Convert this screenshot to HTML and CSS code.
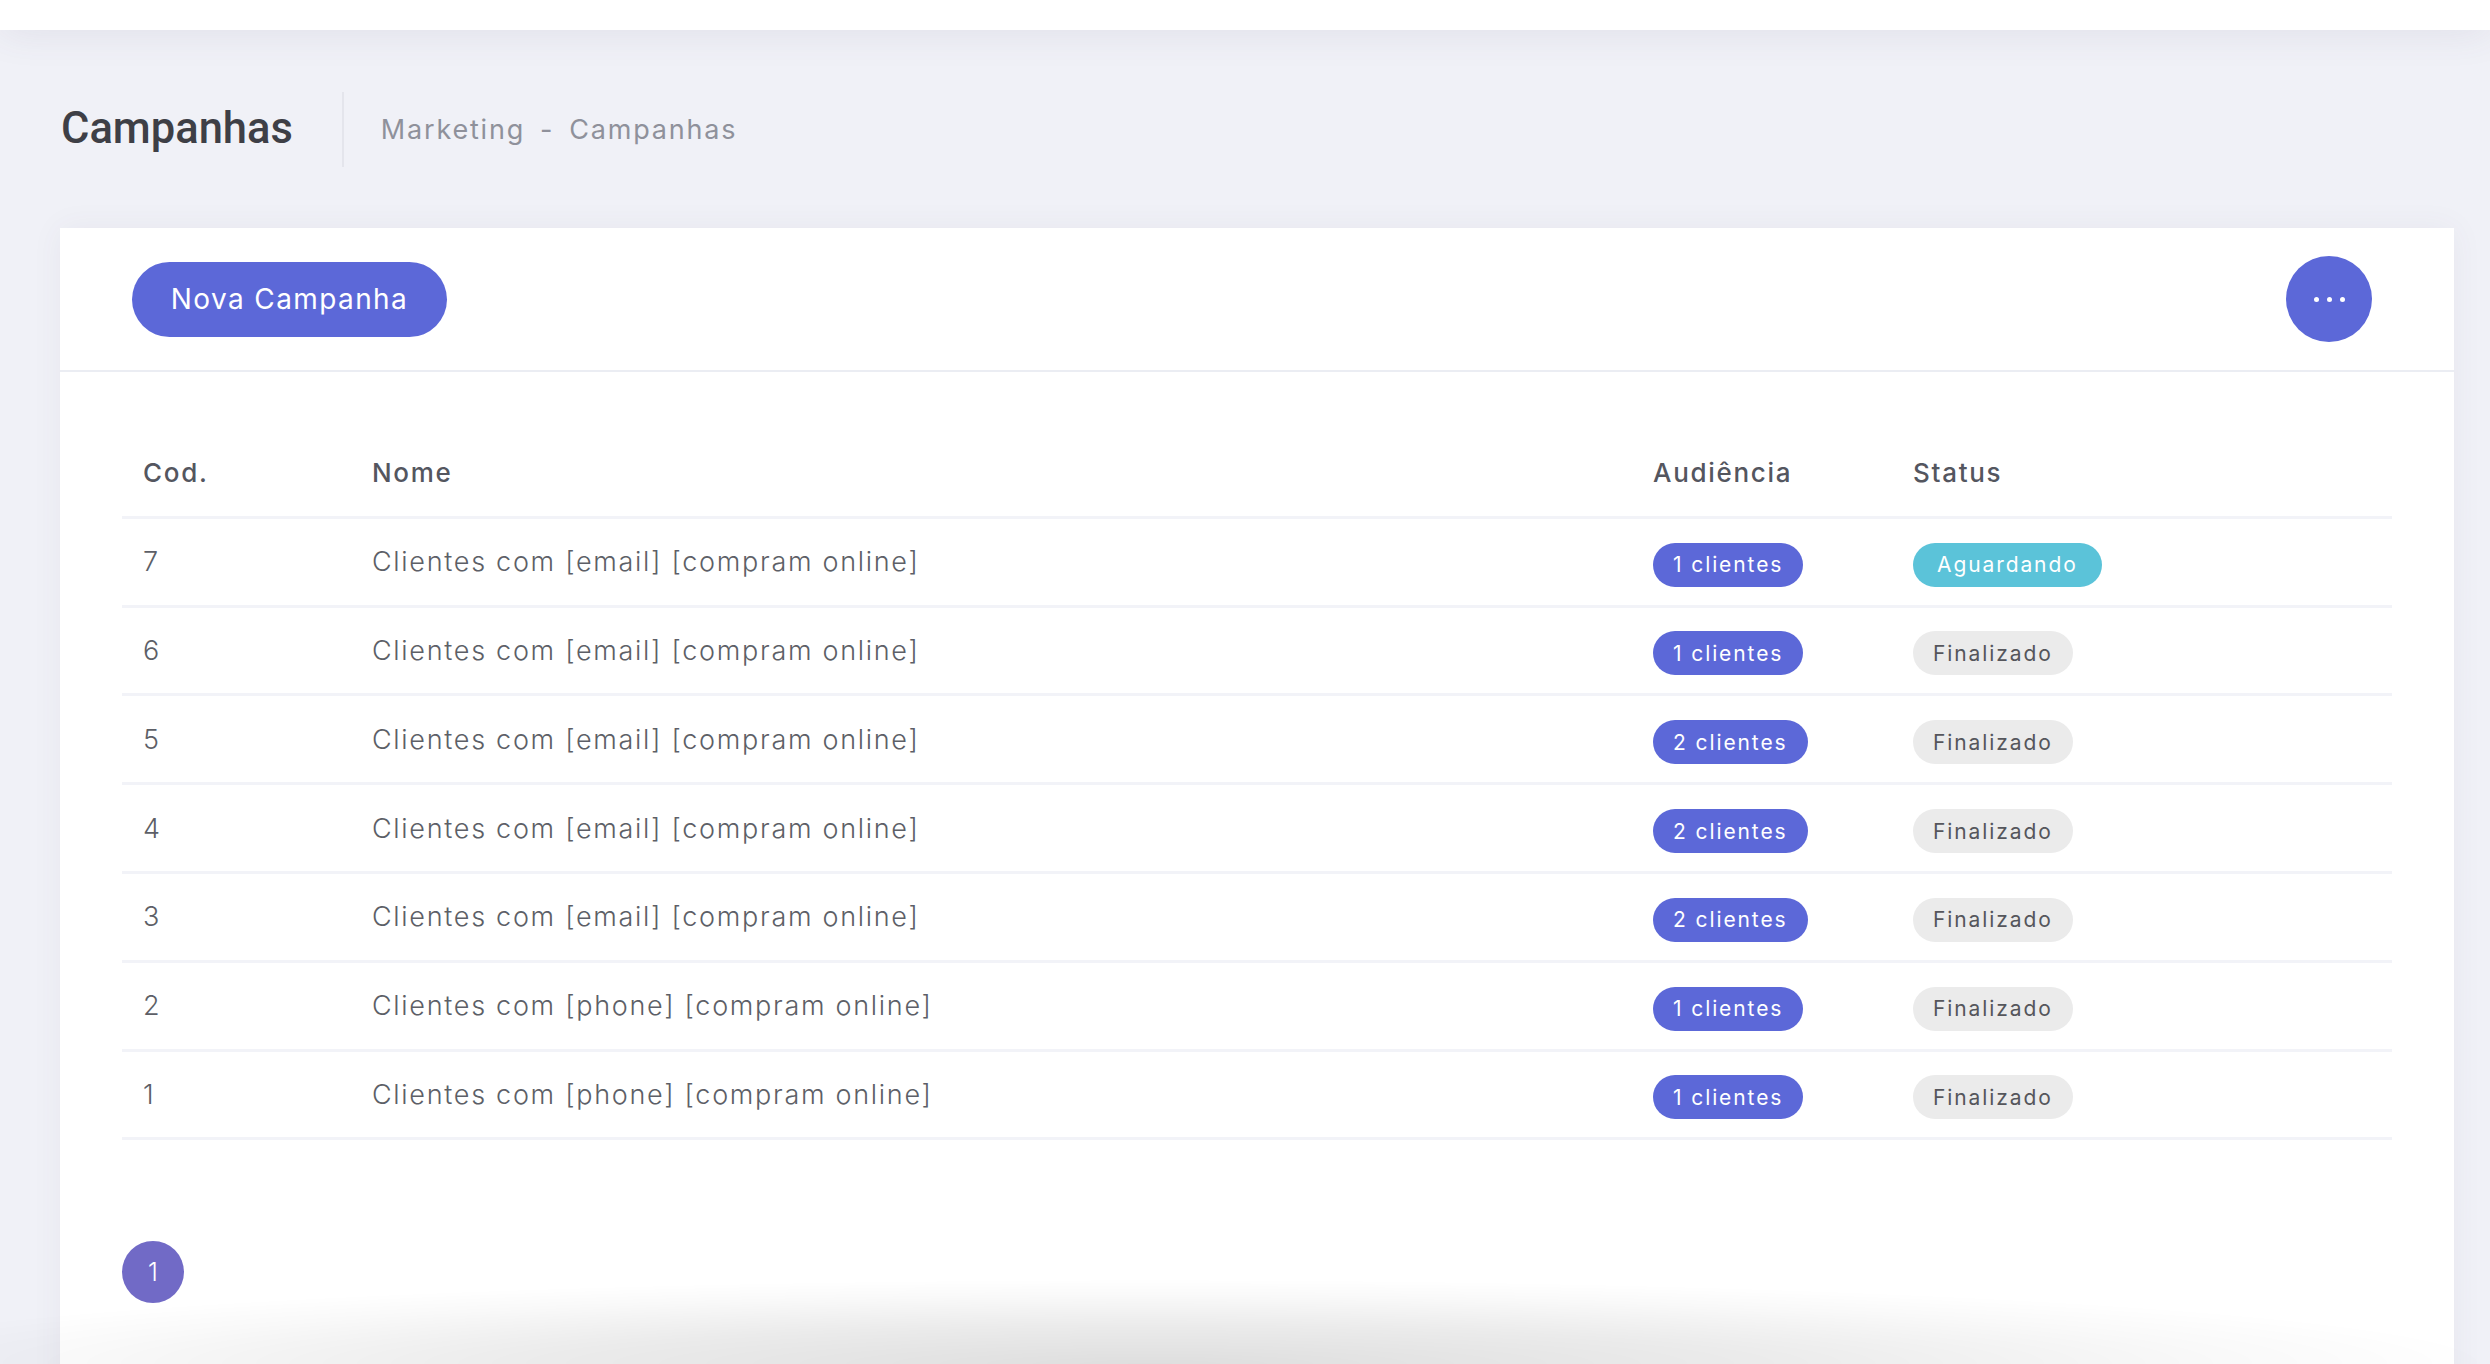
FILE: index.html
```html
<!DOCTYPE html>
<html lang="pt-BR">
<head>
<meta charset="utf-8">
<title>Campanhas</title>
<link rel="stylesheet" href="styles.css">
</head>
<body>
<header class="topbar"></header>

<div class="subheader">
  <h3 class="subheader-title">Campanhas</h3>
  <span class="subheader-sep"></span>
  <div class="breadcrumbs">
    <a class="crumb">Marketing</a>
    <span class="crumb-dash">-</span>
    <a class="crumb">Campanhas</a>
  </div>
</div>

<section class="card">
  <div class="card-head">
    <button class="btn-pill">Nova Campanha</button>
    <button class="btn-more" aria-label="Mais">
      <span class="dot"></span><span class="dot"></span><span class="dot"></span>
    </button>
  </div>
  <div class="card-body">
    <table class="grid">
      <colgroup>
        <col class="c-cod"><col class="c-nome"><col class="c-aud"><col>
      </colgroup>
      <thead>
        <tr><th>Cod.</th><th>Nome</th><th>Audiência</th><th>Status</th></tr>
      </thead>
      <tbody>
        <tr><td>7</td><td>Clientes com [email] [compram online]</td><td><span class="badge badge-brand">1 clientes</span></td><td><span class="badge badge-info">Aguardando</span></td></tr>
        <tr><td>6</td><td>Clientes com [email] [compram online]</td><td><span class="badge badge-brand">1 clientes</span></td><td><span class="badge badge-grey">Finalizado</span></td></tr>
        <tr><td>5</td><td>Clientes com [email] [compram online]</td><td><span class="badge badge-brand">2 clientes</span></td><td><span class="badge badge-grey">Finalizado</span></td></tr>
        <tr><td>4</td><td>Clientes com [email] [compram online]</td><td><span class="badge badge-brand">2 clientes</span></td><td><span class="badge badge-grey">Finalizado</span></td></tr>
        <tr><td>3</td><td>Clientes com [email] [compram online]</td><td><span class="badge badge-brand">2 clientes</span></td><td><span class="badge badge-grey">Finalizado</span></td></tr>
        <tr><td>2</td><td>Clientes com [phone] [compram online]</td><td><span class="badge badge-brand">1 clientes</span></td><td><span class="badge badge-grey">Finalizado</span></td></tr>
        <tr><td>1</td><td>Clientes com [phone] [compram online]</td><td><span class="badge badge-brand">1 clientes</span></td><td><span class="badge badge-grey">Finalizado</span></td></tr>
      </tbody>
    </table>
    <nav class="pager">
      <a class="page current">1</a>
    </nav>
  </div>
</section>

<div class="bottom-fade"></div>
</body>
</html>
```

FILE: styles.css
```css
* { box-sizing: border-box; }

html, body {
  margin: 0;
  padding: 0;
}

body {
  background: #f0f1f7;
  font-family: "Inter", "Open Sans", "DejaVu Sans", sans-serif;
  color: #575962;
  height: 1364px;
  overflow: hidden;
}

.topbar {
  height: 30px;
  background: #ffffff;
  box-shadow: 0 0 40px 0 rgba(82, 63, 105, 0.12);
  position: relative;
  z-index: 2;
}

.subheader {
  height: 198px;
  display: flex;
  align-items: center;
  padding-left: 61px;
}

.subheader-title {
  margin: 0;
  font-family: "Roboto", "Liberation Sans", sans-serif;
  font-weight: 500;
  font-size: 43.5px;
  line-height: 1;
  color: #3e3f46;
}

.subheader-sep {
  width: 2px;
  height: 75px;
  background: #e4e5ec;
  margin: 0 37px 0 49px;
}

.breadcrumbs {
  display: flex;
  align-items: center;
  font-size: 27px;
  font-weight: 400;
  color: #8f919b;
  letter-spacing: 1.8px;
}

.crumb-dash {
  margin: 0 15px;
}

.card {
  margin: 0 36px 0 60px;
  background: #ffffff;
  box-shadow: 0 0 30px 0 rgba(82, 63, 105, 0.06);
  height: 1200px;
}

.card-head {
  height: 144px;
  border-bottom: 2px solid #ebedf3;
  display: flex;
  align-items: center;
  justify-content: space-between;
  padding: 0 82px 0 72px;
}

.btn-pill {
  height: 75px;
  width: 315px;
  border: none;
  border-radius: 38px;
  background: #5c68d8;
  color: #ffffff;
  font-family: "Inter", "Open Sans", sans-serif;
  font-size: 28px;
  font-weight: 400;
  letter-spacing: 1.4px;
  cursor: pointer;
  padding: 0;
}

.btn-more {
  width: 86px;
  height: 86px;
  border-radius: 50%;
  border: none;
  background: #5c68d8;
  display: flex;
  align-items: center;
  justify-content: center;
  gap: 8px;
  padding: 0;
}

.dot {
  width: 5px;
  height: 5px;
  border-radius: 50%;
  background: #ffffff;
}

.card-body {
  padding: 58px 62px 0 62px;
}

.grid {
  width: 100%;
  border-collapse: separate;
  border-spacing: 0;
  table-layout: fixed;
}

.c-cod { width: 229px; }
.c-nome { width: 1281px; }
.c-aud { width: 260px; }

.grid th,
.grid td {
  height: 88.8px;
  padding: 0 21px;
  text-align: left;
  border-bottom: 3px solid #f2f3f8;
  white-space: nowrap;
}

.grid th {
  font-size: 26px;
  font-weight: 500;
  color: #54565f;
  letter-spacing: 1.7px;
}

.grid td {
  font-size: 27px;
  font-weight: 300;
  color: #5d5f67;
  letter-spacing: 1.7px;
}

.badge {
  display: inline-flex;
  align-items: center;
  height: 44px;
  padding: 0 20px;
  border-radius: 22px;
  font-size: 21px;
  font-weight: 400;
  letter-spacing: 1.9px;
  vertical-align: middle;
  margin-top: 6px;
}

.badge-brand { background: #5c68d8; color: #ffffff; }
.badge-info { background: #5bc3d9; color: #ffffff; padding: 0 24px; }
.badge-grey { background: #ebebeb; color: #55565c; }

.pager {
  margin-top: 101px;
  display: flex;
}

.page {
  width: 62px;
  height: 62px;
  border-radius: 50%;
  background: #716ac6;
  color: #ffffff;
  display: flex;
  align-items: center;
  justify-content: center;
  font-size: 25px;
  font-weight: 300;
}

.bottom-fade {
  position: fixed;
  left: 0;
  bottom: 0;
  width: 100%;
  height: 100px;
  pointer-events: none;
  background: radial-gradient(ellipse 1350px 85px at 1150px 100px,
    rgba(0, 0, 0, 0.13) 0%, rgba(0, 0, 0, 0.08) 45%, rgba(0, 0, 0, 0.025) 80%, rgba(0, 0, 0, 0) 100%);
}
```
